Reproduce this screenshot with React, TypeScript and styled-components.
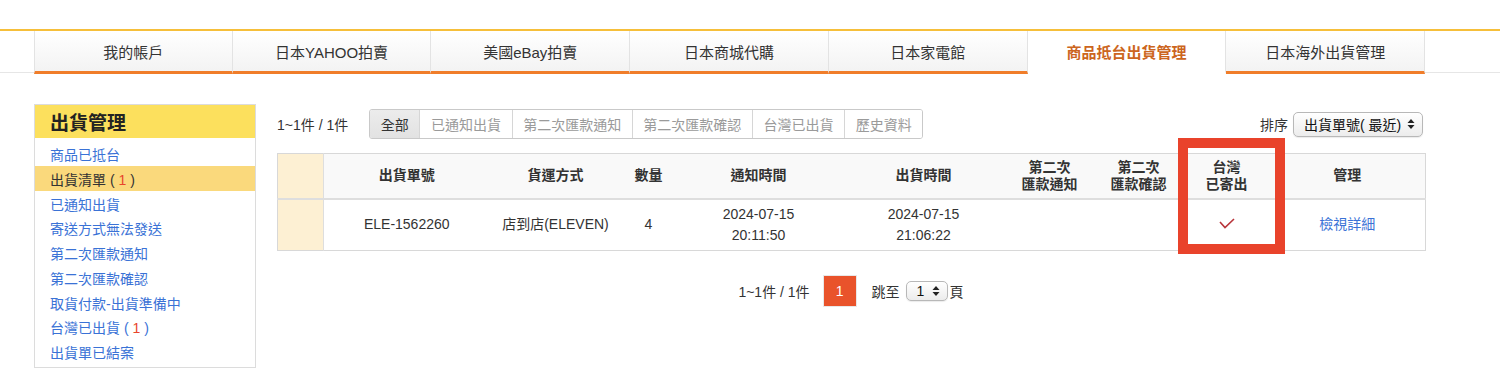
import React from 'react';
import styled, { createGlobalStyle } from 'styled-components';

const GlobalStyle = createGlobalStyle`
  html, body { margin: 0; padding: 0; background: #fff; }
  body {
    font-family: "Liberation Sans", "Noto Sans CJK TC", "Noto Sans", sans-serif;
    color: #333;
  }
  * { box-sizing: border-box; }
`;

const Page = styled.div`
  width: 1500px;
  height: 377px;
  overflow: hidden;
  padding-top: 29px;
`;

const NavBar = styled.nav`
  border-top: 2px solid #f6bf3a;
  border-bottom: 1px solid #e6e6e6;
  height: 44px;
  padding-left: 34px;
`;

const TabRow = styled.div`
  display: grid;
  grid-template-columns: repeat(7, 1fr);
  width: 1391px;
  height: 43px;
`;

const Tab = styled.div<{ $active?: boolean }>`
  display: flex;
  align-items: center;
  justify-content: center;
  font-size: 15px;
  border-right: 1px solid #e3e3e3;
  &:first-child { border-left: 1px solid #e3e3e3; }
  border-bottom: 3px solid ${p => (p.$active ? '#fff' : '#f07d2a')};
  background: ${p => (p.$active ? '#fff' : 'linear-gradient(#ffffff, #f3f3f3)')};
  color: ${p => (p.$active ? '#cc6520' : '#333')};
  font-weight: ${p => (p.$active ? 700 : 400)};
  position: relative;
  z-index: 1;
`;

const Body = styled.div`
  display: flex;
  align-items: flex-start;
  gap: 21px;
  padding: 31px 0 0 34px;
`;

const Sidebar = styled.aside`
  width: 222px;
  height: 264px;
  border: 1px solid #dcdcdc;
`;

const SideHeader = styled.div`
  height: 33px;
  background: #fce05d;
  display: flex;
  align-items: center;
  padding-left: 15px;
  font-size: 19px;
  font-weight: 700;
  color: #222;
`;

const SideList = styled.div`
  padding-top: 3px;
`;

const SideItem = styled.div<{ $current?: boolean }>`
  height: 24.75px;
  padding: 3px 0 0 15px;
  line-height: 22px;
  font-size: 14px;
  color: ${p => (p.$current ? '#333' : '#3a72d6')};
  background: ${p => (p.$current ? '#fad97c' : 'transparent')};
  white-space: nowrap;
`;

const Count = styled.span`
  color: #e8452b;
`;

const Main = styled.div`
  width: 1148px;
  padding-top: 5px;
`;

const Toolbar = styled.div`
  display: flex;
  align-items: center;
  height: 30px;
`;

const Summary = styled.span`
  font-size: 14px;
  color: #333;
  margin-right: 21px;
`;

const FilterGroup = styled.div`
  display: flex;
  height: 30px;
  border: 1px solid #c9c9c9;
  border-radius: 3px;
  overflow: hidden;
`;

const FilterBtn = styled.div<{ $active?: boolean }>`
  display: flex;
  align-items: center;
  padding: 0 10.6px;
  font-size: 14px;
  color: ${p => (p.$active ? '#333' : '#9a9a9a')};
  background: ${p => (p.$active ? 'linear-gradient(#ececec, #e2e2e2)' : '#fff')};
  & + & { border-left: 1px solid #d6d6d6; }
`;

const SortArea = styled.div`
  margin-left: auto;
  display: flex;
  align-items: center;
  gap: 5px;
  font-size: 14px;
  margin-right: 2px;
`;

const SelectBox = styled.div<{ $w: number; $h: number }>`
  display: flex;
  align-items: center;
  justify-content: space-between;
  width: ${p => p.$w}px;
  height: ${p => p.$h}px;
  padding: 0 7px 0 10px;
  border: 1px solid #b8b8b8;
  border-radius: 5px;
  background: linear-gradient(#ffffff, #ececec);
  box-shadow: 0 1px 1px rgba(0, 0, 0, 0.08);
  font-size: 14px;
  color: #111;
`;

const TableWrap = styled.div`
  position: relative;
  margin-top: 14px;
`;

const Table = styled.table`
  width: 1148px;
  border-collapse: collapse;
  table-layout: fixed;
  border: 1px solid #d8d8d8;
`;

const HeadCell = styled.th<{ $marker?: boolean }>`
  height: 45px;
  font-size: 14px;
  font-weight: 700;
  line-height: 17px;
  color: #333;
  text-align: center;
  background: ${p => (p.$marker ? '#fdf0d3' : '#f9f9f9')};
  border-bottom: 2px solid #dedede;
  ${p => (p.$marker ? 'border-right: 1px solid #dedede;' : '')}
`;

const Cell = styled.td<{ $marker?: boolean }>`
  height: 52px;
  font-size: 14px;
  line-height: 21px;
  text-align: center;
  color: #333;
  background: ${p => (p.$marker ? '#fdf0d3' : '#fff')};
  ${p => (p.$marker ? 'border-right: 1px solid #dedede;' : '')}
`;

const Link = styled.span`
  color: #3a72d6;
`;

const Highlight = styled.div`
  position: absolute;
  left: 901px;
  top: -15px;
  width: 107px;
  height: 116px;
  border: 10px solid #e9432b;
  pointer-events: none;
`;

const Pager = styled.div`
  display: flex;
  align-items: center;
  justify-content: center;
  margin-top: 24px;
  font-size: 14px;
  color: #333;
`;

const PageNum = styled.div`
  width: 34px;
  height: 32px;
  margin: 0 15px 0 13px;
  display: flex;
  align-items: center;
  justify-content: center;
  background: #e9532b;
  color: #fff;
  font-size: 14px;
  border: 1px solid #e8e8e8;
`;

const JumpLabel = styled.span`
  margin-right: 6px;
`;

const PageUnit = styled.span`
  margin-left: 2px;
`;

const Arrows = () => (
  <svg width="8" height="12" viewBox="0 0 8 12">
    <path d="M4 1 L7.5 5 L0.5 5 Z" fill="#222" />
    <path d="M4 11 L7.5 7 L0.5 7 Z" fill="#222" />
  </svg>
);

const Check = () => (
  <svg width="16" height="11" viewBox="0 0 16 11">
    <polyline points="1,4 6,9.5 15,1" fill="none" stroke="#b8343a" strokeWidth="1.6" />
  </svg>
);

const tabs = ['我的帳戶', '日本YAHOO拍賣', '美國eBay拍賣', '日本商城代購', '日本家電館', '商品抵台出貨管理', '日本海外出貨管理'];
const filters = ['全部', '已通知出貨', '第二次匯款通知', '第二次匯款確認', '台灣已出貨', '歷史資料'];
const colWidths = [46, 166, 132, 54, 166, 164, 88, 90, 86, 156];

export default function App() {
  return (
    <Page>
      <GlobalStyle />
      <NavBar>
        <TabRow>
          {tabs.map((t, i) => (
            <Tab key={t} $active={i === 5}>{t}</Tab>
          ))}
        </TabRow>
      </NavBar>
      <Body>
        <Sidebar>
          <SideHeader>出貨管理</SideHeader>
          <SideList>
            <SideItem>商品已抵台</SideItem>
            <SideItem $current>出貨清單 ( <Count>1</Count> )</SideItem>
            <SideItem>已通知出貨</SideItem>
            <SideItem>寄送方式無法發送</SideItem>
            <SideItem>第二次匯款通知</SideItem>
            <SideItem>第二次匯款確認</SideItem>
            <SideItem>取貨付款-出貨準備中</SideItem>
            <SideItem>台灣已出貨 ( <Count>1</Count> )</SideItem>
            <SideItem>出貨單已結案</SideItem>
          </SideList>
        </Sidebar>
        <Main>
          <Toolbar>
            <Summary>1~1件 / 1件</Summary>
            <FilterGroup>
              {filters.map((f, i) => (
                <FilterBtn key={f} $active={i === 0}>{f}</FilterBtn>
              ))}
            </FilterGroup>
            <SortArea>
              排序
              <SelectBox $w={130} $h={25}>
                出貨單號( 最近)
                <Arrows />
              </SelectBox>
            </SortArea>
          </Toolbar>
          <TableWrap>
            <Table>
              <colgroup>
                {colWidths.map((w, i) => (
                  <col key={i} style={{ width: w }} />
                ))}
              </colgroup>
              <thead>
                <tr>
                  <HeadCell $marker />
                  <HeadCell>出貨單號</HeadCell>
                  <HeadCell>貨運方式</HeadCell>
                  <HeadCell>數量</HeadCell>
                  <HeadCell>通知時間</HeadCell>
                  <HeadCell>出貨時間</HeadCell>
                  <HeadCell>第二次<br />匯款通知</HeadCell>
                  <HeadCell>第二次<br />匯款確認</HeadCell>
                  <HeadCell>台灣<br />已寄出</HeadCell>
                  <HeadCell>管理</HeadCell>
                </tr>
              </thead>
              <tbody>
                <tr>
                  <Cell $marker />
                  <Cell>ELE-1562260</Cell>
                  <Cell>店到店(ELEVEN)</Cell>
                  <Cell>4</Cell>
                  <Cell>2024-07-15<br />20:11:50</Cell>
                  <Cell>2024-07-15<br />21:06:22</Cell>
                  <Cell />
                  <Cell />
                  <Cell><Check /></Cell>
                  <Cell><Link>檢視詳細</Link></Cell>
                </tr>
              </tbody>
            </Table>
            <Highlight />
          </TableWrap>
          <Pager>
            1~1件 / 1件
            <PageNum>1</PageNum>
            <JumpLabel>跳至</JumpLabel>
            <SelectBox $w={42} $h={20}>
              1
              <Arrows />
            </SelectBox>
            <PageUnit>頁</PageUnit>
          </Pager>
        </Main>
      </Body>
    </Page>
  );
}
